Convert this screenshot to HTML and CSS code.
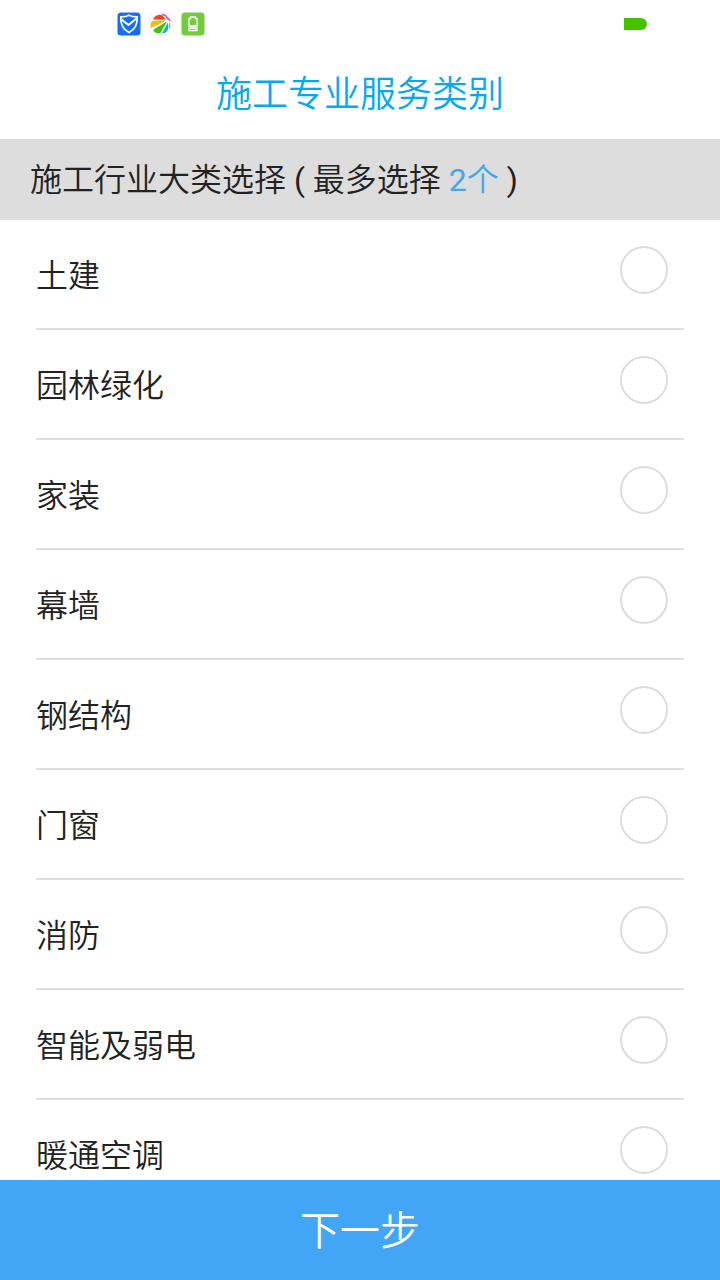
FILE: index.html
```html
<!DOCTYPE html>
<html lang="zh-CN">
<head>
<meta charset="utf-8">
<meta name="viewport" content="width=device-width, initial-scale=1">
<title>施工专业服务类别</title>
<link rel="stylesheet" href="styles.css">
</head>
<body>
<div class="status-bar">
  <div class="status-icons">
    <svg class="status-icon" viewBox="0 0 24 24" aria-hidden="true">
      <rect x="0.500" y="0.500" width="23" height="23" rx="3.500" fill="#156efb"/>
      <path d="M12 3.200C9.600 4.400 6.700 4.900 3.800 4.800C3.400 11.500 5.200 17 12 20.500C18.800 17 20.600 11.500 20.200 4.800C17.300 4.900 14.400 4.400 12 3.200Z" fill="none" stroke="#fff" stroke-width="1.700"/>
      <path d="M4.500 7.500L11.500 13L19.500 6.500" fill="none" stroke="#fff" stroke-width="2"/>
    </svg>
    <svg class="status-icon" viewBox="0 0 24 24" aria-hidden="true">
      <rect x="0.500" y="0.500" width="23" height="23" rx="4" fill="#fff" stroke="#f3f3f3"/>
      <path d="M4 7.500C6 3 11 2 13.500 3.500L17 7.500Z" fill="#fa4010"/>
      <path d="M2 16C1 13 1.600 10 3.500 8.800L17.500 8.500Z" fill="#ffb60c"/>
      <path d="M4 18L18 9.300L11.500 21C8.500 22 5.500 20.500 4 18Z" fill="#42c300"/>
      <path d="M13 21.300L18.800 10.500C20 14 19.500 17.500 18 19.500C16.500 21 14.500 21.500 13 21.300Z" fill="#12b2df"/>
      <path d="M20 10C22 12 22 15.500 20 18Z" fill="#5cc9ec"/>
      <path d="M13 2.300C16 2.500 18 4 19 7.500M18.800 6.200L21.500 9" fill="none" stroke="#bd62ec" stroke-width="1.800"/>
    </svg>
    <svg class="status-icon" viewBox="0 0 24 24" aria-hidden="true">
      <rect x="0.500" y="0.500" width="23" height="23" rx="3.500" fill="#70cc3b"/>
      <path d="M9.500 6.500V5H14.500V6.500H16V18.500H8V6.500Z" fill="none" stroke="#fff" stroke-width="1.300"/>
      <rect x="9" y="13" width="6" height="4" fill="#fff"/>
    </svg>
  </div>
  <div class="battery"></div>
</div>
<header class="title-bar"><h1 class="title">施工专业服务类别</h1></header>
<h2 class="section-title">施工行业大类选择<span class="latin"> ( </span>最多选择<span class="latin"> </span><span class="limit"><span class="latin">2</span>个</span><span class="latin"> )</span></h2>
<main class="options">
  <label class="option"><span class="option-name">土建</span><input class="option-check" type="checkbox" name="category"></label>
  <label class="option"><span class="option-name">园林绿化</span><input class="option-check" type="checkbox" name="category"></label>
  <label class="option"><span class="option-name">家装</span><input class="option-check" type="checkbox" name="category"></label>
  <label class="option"><span class="option-name">幕墙</span><input class="option-check" type="checkbox" name="category"></label>
  <label class="option"><span class="option-name">钢结构</span><input class="option-check" type="checkbox" name="category"></label>
  <label class="option"><span class="option-name">门窗</span><input class="option-check" type="checkbox" name="category"></label>
  <label class="option"><span class="option-name">消防</span><input class="option-check" type="checkbox" name="category"></label>
  <label class="option"><span class="option-name">智能及弱电</span><input class="option-check" type="checkbox" name="category"></label>
  <label class="option"><span class="option-name">暖通空调</span><input class="option-check" type="checkbox" name="category"></label>
</main>
<button class="next" type="button">下一步</button>
</body>
</html>
```
FILE: styles.css
```css
* {
  box-sizing: border-box;
}

body {
  margin: 0;
  height: 100vh;
  display: flex;
  flex-direction: column;
  background: #fff;
  color: #222;
  font-family: Roboto, "Noto Sans CJK SC", sans-serif;
  font-weight: 350;
}

.status-bar {
  flex: none;
  display: flex;
  align-items: center;
  justify-content: space-between;
  height: 48px;
  padding: 0 73px 0 117px;
}

.status-icons {
  display: flex;
  gap: 8px;
}

.status-icon {
  display: block;
  width: 24px;
  height: 24px;
}

.battery {
  width: 23px;
  height: 12px;
  border-radius: 0 6px 6px 0;
  background: #46c300;
}

.title-bar {
  flex: none;
  padding: 21px 0 18px;
}

.title {
  margin: 0;
  color: #03a9f4;
  font-size: 36px;
  font-weight: inherit;
  line-height: 52px;
  text-align: center;
}

.section-title {
  flex: none;
  margin: 0;
  padding: 17px 30px 16px;
  background: #ddd;
  font-size: 32px;
  font-weight: inherit;
  line-height: 48px;
}

.limit {
  color: #42a5f5;
}

.latin {
  font-weight: 400;
}

.options {
  flex: 1;
  min-height: 0;
  padding: 0 36px;
  overflow-y: auto;
  scrollbar-width: none;
}

.option {
  display: flex;
  justify-content: space-between;
  padding: 26px 16px 26px 0;
  border-bottom: 2px solid #ddd;
}

.option-name {
  padding-top: 4px;
  font-size: 32px;
  line-height: 52px;
}

.option-check {
  appearance: none;
  width: 48px;
  height: 48px;
  margin: 0;
  border: 2px solid #ddd;
  border-radius: 50%;
}

.option-check:checked {
  border-color: #42a5f5;
  background: #42a5f5;
}

.next {
  flex: none;
  padding: 22px 20px 18px;
  border: 0;
  background: #42a5f5;
  color: #fff;
  font-family: inherit;
  font-size: 40px;
  font-weight: inherit;
  line-height: 60px;
}
```
